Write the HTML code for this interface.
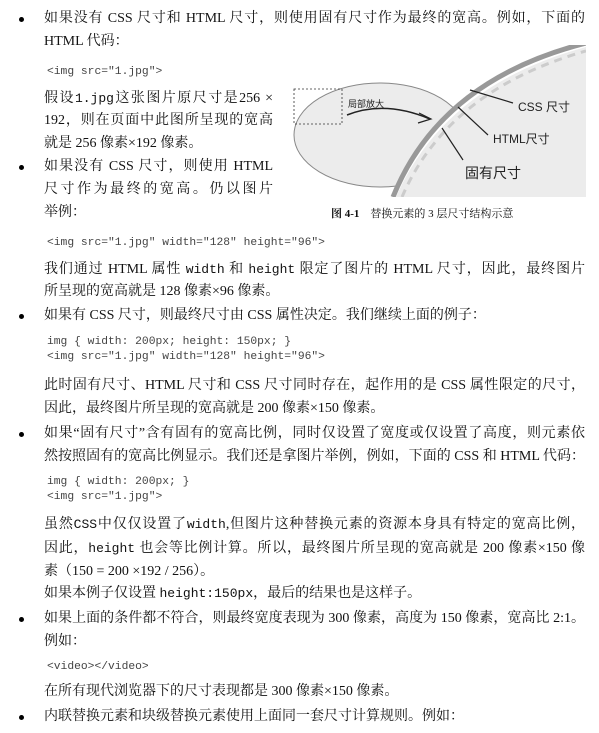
<!DOCTYPE html>
<html><head><meta charset="utf-8"><style>
html,body{margin:0;padding:0;background:#fff;}
body{width:599px;height:733px;position:relative;overflow:hidden;font-family:"Liberation Serif","Noto Serif CJK SC",serif;font-size:14px;color:#111;}
.l{position:absolute;left:44px;height:22px;line-height:22px;white-space:nowrap;}
.j{width:541px;text-align:justify;text-align-last:justify;white-space:normal;overflow:hidden;}
.n{width:229px;text-align:justify;text-align-last:justify;white-space:normal;overflow:hidden;}
.c{position:absolute;left:47px;font-family:"Liberation Mono",monospace;font-size:11.3px;color:#444;line-height:15px;white-space:pre;}
.m{font-family:"Liberation Mono",monospace;font-size:13px;}
.b{position:absolute;left:19px;width:5px;height:5px;border-radius:50%;background:#000;}
.cap{position:absolute;left:331px;top:206px;font-size:11px;line-height:16px;white-space:nowrap;}
</style></head><body>
<div class="b" style="top:17px"></div>
<div class="l j" style="top:8px">如果没有 CSS 尺寸和 HTML 尺寸，则使用固有尺寸作为最终的宽高。例如，下面的</div>
<div class="l" style="top:31px">HTML 代码：</div>
<div class="c" style="top:65px">&lt;img src="1.jpg"&gt;</div>
<div class="l n" style="top:88px">假设<span class="m">1.jpg</span>这张图片原尺寸是256 ×</div>
<div class="l n" style="top:110px">192，则在页面中此图所呈现的宽高</div>
<div class="l" style="top:133px">就是 256 像素×192 像素。</div>
<div class="b" style="top:165px"></div>
<div class="l n" style="top:156px">如果没有 CSS 尺寸，则使用 HTML</div>
<div class="l n" style="top:179px">尺寸作为最终的宽高。仍以图片</div>
<div class="l" style="top:202px">举例：</div>
<svg style="position:absolute;left:290px;top:45px" width="296" height="152" viewBox="0 0 296 152">
<ellipse cx="90" cy="90" rx="86" ry="52" fill="#ececec" stroke="#888" stroke-width="1"/>
<rect x="4" y="44" width="48" height="35" fill="none" stroke="#333" stroke-dasharray="2,2" stroke-width="0.8"/>
<path d="M60 0 L296 0 L296 152 L100 152 Q150 35 296 0 Z" fill="#fff"/>
<path d="M106 152 Q155 40 296 2 L296 152 Z" fill="#ececec"/>
<path d="M103 152 Q150 35 296 -2" fill="none" stroke="#999" stroke-width="5"/>
<path d="M112 152 Q158 45 296 6" fill="none" stroke="#ccc" stroke-width="3" stroke-dasharray="8,6"/>
<path d="M57 70 Q95 55 140 74" fill="none" stroke="#222" stroke-width="1.5"/>
<path d="M129 68 L141 74 L128 78" fill="none" stroke="#222" stroke-width="1.2"/>
<text x="58" y="62" font-size="9" font-family="Noto Sans CJK SC,sans-serif" fill="#222">局部放大</text>
<path d="M180 45 L223 58" stroke="#222" stroke-width="1.2"/>
<path d="M168 62 L198 90" stroke="#222" stroke-width="1.2"/>
<path d="M152 83 L173 115" stroke="#222" stroke-width="1.2"/>
<text x="228" y="66" font-size="12" font-family="Liberation Sans,Noto Sans CJK SC,sans-serif" fill="#222">CSS 尺寸</text>
<text x="203" y="98" font-size="12" font-family="Liberation Sans,Noto Sans CJK SC,sans-serif" fill="#222">HTML尺寸</text>
<text x="175" y="133" font-size="14" font-family="Noto Sans CJK SC,sans-serif" fill="#222">固有尺寸</text>
</svg>
<div class="cap"><b>图 4-1</b>&nbsp;&nbsp;&nbsp;&nbsp;替换元素的 3 层尺寸结构示意</div>
<div class="c" style="top:236px">&lt;img src="1.jpg" width="128" height="96"&gt;</div>
<div class="l j" style="top:259px">我们通过 HTML 属性 <span class="m">width</span> 和 <span class="m">height</span> 限定了图片的 HTML 尺寸，因此，最终图片</div>
<div class="l" style="top:281px">所呈现的宽高就是 128 像素×96 像素。</div>
<div class="b" style="top:314px"></div>
<div class="l" style="top:305px">如果有 CSS 尺寸，则最终尺寸由 CSS 属性决定。我们继续上面的例子：</div>
<div class="c" style="top:335px">img { width: 200px; height: 150px; }
&lt;img src="1.jpg" width="128" height="96"&gt;</div>
<div class="l j" style="top:375px">此时固有尺寸、HTML 尺寸和 CSS 尺寸同时存在，起作用的是 CSS 属性限定的尺寸，</div>
<div class="l" style="top:398px">因此，最终图片所呈现的宽高就是 200 像素×150 像素。</div>
<div class="b" style="top:432px"></div>
<div class="l j" style="top:423px">如果“固有尺寸”含有固有的宽高比例，同时仅设置了宽度或仅设置了高度，则元素依</div>
<div class="l j" style="top:446px">然按照固有的宽高比例显示。我们还是拿图片举例，例如，下面的 CSS 和 HTML 代码：</div>
<div class="c" style="top:475px">img { width: 200px; }
&lt;img src="1.jpg"&gt;</div>
<div class="l j" style="top:514px">虽然<span class="m">CSS</span>中仅仅设置了<span class="m">width</span>,但图片这种替换元素的资源本身具有特定的宽高比例，</div>
<div class="l j" style="top:538px">因此，<span class="m">height</span> 也会等比例计算。所以，最终图片所呈现的宽高就是 200 像素×150 像</div>
<div class="l" style="top:561px">素（150 = 200 ×192 / 256）。</div>
<div class="l" style="top:583px">如果本例子仅设置 <span class="m">height:150px</span>，最后的结果也是这样子。</div>
<div class="b" style="top:617px"></div>
<div class="l j" style="top:608px">如果上面的条件都不符合，则最终宽度表现为 300 像素，高度为 150 像素，宽高比 2:1。</div>
<div class="l" style="top:631px">例如：</div>
<div class="c" style="top:660px">&lt;video&gt;&lt;/video&gt;</div>
<div class="l" style="top:681px">在所有现代浏览器下的尺寸表现都是 300 像素×150 像素。</div>
<div class="b" style="top:715px"></div>
<div class="l" style="top:706px">内联替换元素和块级替换元素使用上面同一套尺寸计算规则。例如：</div>
</body></html>
